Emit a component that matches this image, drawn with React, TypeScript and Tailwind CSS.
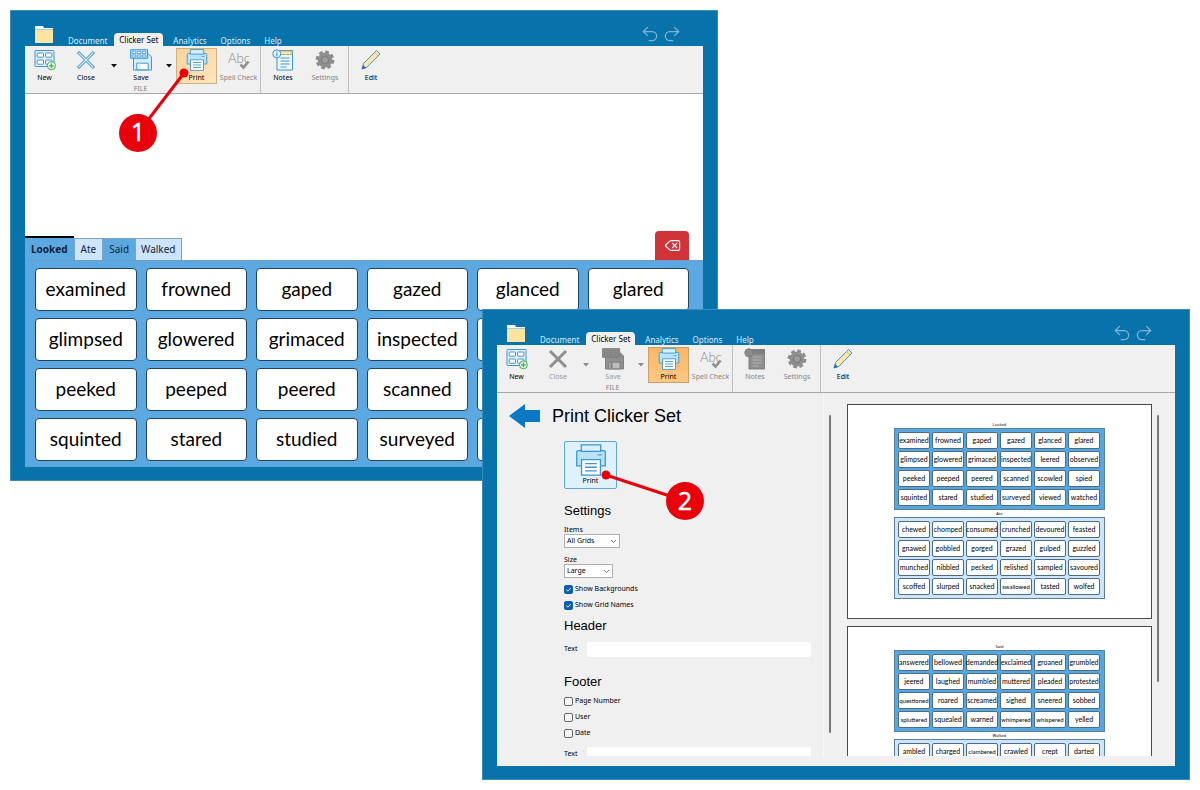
import React, { useId } from 'react';
import { Delete, Redo2, Undo2 } from 'lucide-react';

const BLUE = '#3f95cf';
const GRAY = '#8f8f8f';

const GRIDS = {
  Looked: [
    'examined', 'frowned', 'gaped', 'gazed', 'glanced', 'glared',
    'glimpsed', 'glowered', 'grimaced', 'inspected', 'leered', 'observed',
    'peeked', 'peeped', 'peered', 'scanned', 'scowled', 'spied',
    'squinted', 'stared', 'studied', 'surveyed', 'viewed', 'watched',
  ],
  Ate: [
    'chewed', 'chomped', 'consumed', 'crunched', 'devoured', 'feasted',
    'gnawed', 'gobbled', 'gorged', 'grazed', 'gulped', 'guzzled',
    'munched', 'nibbled', 'pecked', 'relished', 'sampled', 'savoured',
    'scoffed', 'slurped', 'snacked', 'swallowed', 'tasted', 'wolfed',
  ],
  Said: [
    'answered', 'bellowed', 'demanded', 'exclaimed', 'groaned', 'grumbled',
    'jeered', 'laughed', 'mumbled', 'muttered', 'pleaded', 'protested',
    'questioned', 'roared', 'screamed', 'sighed', 'sneered', 'sobbed',
    'spluttered', 'squealed', 'warned', 'whimpered', 'whispered', 'yelled',
  ],
  Walked: ['ambled', 'charged', 'clambered', 'crawled', 'crept', 'darted'],
};

// too long for a preview cell at the normal size
const LONG_WORDS = ['swallowed', 'questioned', 'spluttered', 'whimpered', 'whispered', 'clambered'];

const FolderIcon = () => (
  <svg width="20" height="18" viewBox="0 0 20 18" aria-hidden="true">
    <path d="M1 0h8l1 2h9v4H1z" fill="#fff" />
    <path d="M1 4h18v13H1z" fill="#ffe3a1" />
    <path d="M1 3.5h18" stroke="#9fd0ee" />
  </svg>
);

const NewIcon = () => (
  <svg width="22" height="22" viewBox="0 0 22 22" fill="none" stroke={BLUE} aria-hidden="true">
    <rect x="1" y="1.5" width="19" height="16" rx="1" fill="#e3f2fc" />
    <g fill="#fff">
      <rect x="3.2" y="4" width="6.3" height="4.2" rx=".6" />
      <rect x="11.6" y="4" width="6.3" height="4.2" rx=".6" />
      <rect x="3.2" y="11" width="6.3" height="4.2" rx=".6" />
      <rect x="11.6" y="11" width="6.3" height="4.2" rx=".6" />
    </g>
    <circle cx="17.4" cy="16.8" r="4" fill="#e9f8ea" stroke="#45ad50" />
    <path d="M17.4 14.4v4.8M15 16.8h4.8" stroke="#45ad50" strokeWidth="1.3" />
  </svg>
);

const CloseIcon = ({ disabled }: { disabled?: boolean }) => (
  <svg width="22" height="22" viewBox="0 0 22 22" fill="none" aria-hidden="true">
    <path d="M3 3l16 16M19 3L3 19" stroke={disabled ? GRAY : BLUE} strokeWidth="3" />
    {!disabled && <path d="M3.6 3.6l14.800 14.800M18.400 3.600L3.600 18.400" stroke="#e3f2fc" strokeWidth="1.3" />}
  </svg>
);

const SaveIcon = ({ disabled }: { disabled?: boolean }) => {
  const line = disabled ? '#7f7f7f' : BLUE;
  return (
    <svg width="22" height="22" viewBox="0 0 22 22" fill="none" stroke={line} aria-hidden="true">
      <path d="M3.5 4.5h14.5l3.500 3.500v13h-18z" fill={disabled ? GRAY : '#d3ecfb'} />
      <path d="M.6.7h17v8.600H.6z" fill={disabled ? GRAY : '#c7e7fb'} />
      <path
        d="M2.2 2.3h3.600v2.200H2.200zM7.300 2.300h3.600v2.200H7.300zM12.400 2.300H16v2.200h-3.600zM2.200 6h3.600v2H2.200zM7.300 6h3.600v2H7.300zM12.400 6H16v2h-3.600z"
        fill={disabled ? GRAY : '#fff'}
        strokeWidth=".8"
      />
      <path d="M6.8 14.2h11.400v6.600H6.800z" fill={disabled ? '#bdbdbd' : '#fff'} />
      <path d="M8.5 14.5h2v5.500h-2z" fill={disabled ? '#7f7f7f' : '#d3ecfb'} stroke="none" />
    </svg>
  );
};

const PrintIcon = ({ size = 22 }: { size?: number }) => (
  <svg width={size} height={size} viewBox="0 0 22 22" fill="none" stroke={BLUE} strokeWidth=".9" aria-hidden="true">
    <path d="M1.2 5.5q0-1 1-1h17.600q1 0 1 1V15H1.200z" fill="#b9e2fb" />
    <path d="M4.3.6h13.400v4.500H4.300z" fill="#d9f0fd" />
    <path d="M4.5 10.8h13v10.600h-13z" fill="#fff" />
    <path d="M7 13.5h8M7 16h8M7 18.5h8" />
    <path d="M15.5 7.5h3" strokeWidth=".7" />
  </svg>
);

const SpellIcon = () => (
  <svg width="22" height="22" viewBox="0 0 22 22" aria-hidden="true">
    <text x="0" y="14" fontSize="13" fontWeight="300" fill="#858585" fontFamily="Lato, sans-serif">Abc</text>
    <path d="M12.5 15.5l3 3 5-6" fill="none" stroke={GRAY} strokeWidth="2.6" />
  </svg>
);

const NotesIcon = ({ disabled }: { disabled?: boolean }) => {
  const line = disabled ? '#7f7f7f' : BLUE;
  return (
    <svg width="22" height="22" viewBox="0 0 22 22" fill="none" stroke={line} aria-hidden="true">
      <path d="M5 1.5h15.500v19.500H5z" fill={disabled ? GRAY : '#eef8fe'} />
      <path d="M5.5 2h14.500v3.500H5.500z" fill={disabled ? '#7f7f7f' : '#ffe3a1'} stroke={disabled ? '#7f7f7f' : '#a9a26e'} strokeWidth=".8" />
      <path d="M8.5 9h9M8.5 12h9M8.5 15h9M8.5 18h6" stroke={disabled ? '#b5b5b5' : BLUE} />
      <circle cx="4.8" cy="4.8" r="4" fill={disabled ? GRAY : '#e3f2fc'} />
      <path d="M4.8 4.3v3M4.8 2.4v1" stroke={disabled ? '#7f7f7f' : BLUE} strokeWidth="1.2" />
    </svg>
  );
};

const GearIcon = () => (
  <svg width="22" height="22" viewBox="0 0 22 22" fill="none" aria-hidden="true">
    <circle cx="11" cy="11" r="7.8" stroke="#8c8c8c" strokeWidth="3.2" strokeDasharray="3.6 2.526" />
    <circle cx="11" cy="11" r="7.4" fill="#8f8f8f" />
    <circle cx="11" cy="11" r="3.6" fill="#9c9c9c" stroke="#777" />
  </svg>
);

const PencilIcon = () => (
  <svg width="22" height="22" viewBox="0 0 22 22" fill="none" aria-hidden="true">
    <path d="M2 20l1.5-5.500L16.500 1.500l3.500 3.500L7 18.200z" fill="#ffe7ac" stroke={BLUE} strokeLinejoin="round" />
    <path d="M14.500 3.500l3.700 3.600" stroke="#c9b069" strokeWidth=".9" />
    <path d="M1.8 20.2l1.300-4.300 3 3z" fill="#3565b0" />
  </svg>
);

interface ToolProps {
  icon: React.ReactNode;
  label: string;
  className: string;
  tone?: string;
}

const Tool = ({ icon, label, className, tone = 'text-black' }: ToolProps) => (
  <button className={`flex h-9 shrink-0 flex-col items-center gap-0.5 pt-px ${className}`}>
    {icon}
    <span className={`text-[7px] leading-[10px] whitespace-nowrap ${tone}`}>{label}</span>
  </button>
);

const MenuArrow = ({ label, className, disabled }: { label: string; className: string; disabled?: boolean }) => (
  <button aria-label={label} className={`flex h-9 shrink-0 items-center justify-center ${className}`}>
    <svg width="6" height="4" viewBox="0 0 6 4" aria-hidden="true">
      <path d="M0 0h6L3 3.5z" fill={disabled ? '#8a8a8a' : '#111'} />
    </svg>
  </button>
);

const TitleBar = () => (
  <header className="flex h-[35px] items-end justify-between">
    <div className="flex items-end">
      <span className="mr-2 mb-0.5 ml-[9px]">
        <FolderIcon />
      </span>
      <nav className="flex items-end text-[8px] leading-[11px] text-[#d9ecf8]">
        <button className="pr-[7px] pl-1.5">Document</button>
        <button className="mr-[3px] h-[13px] rounded-t-sm bg-[#f0f0f0] px-[5px] text-black">Clicker Set</button>
        <button className="px-[7px]">Analytics</button>
        <button className="px-[7px]">Options</button>
        <button className="px-[7px]">Help</button>
      </nav>
    </div>
    <div className="mr-[21px] mb-0.5 flex gap-0.5 text-[#7fb4d8]">
      <button aria-label="Undo"><Undo2 size={20} strokeWidth={1.5} /></button>
      <button aria-label="Redo"><Redo2 size={20} strokeWidth={1.5} /></button>
    </div>
  </header>
);

const Ribbon = ({ printing }: { printing?: boolean }) => {
  const off = printing ? 'text-[#9a9a9a]' : 'text-black';
  return (
    <div className="flex h-12 border-b border-[#a9a9a9] bg-[#f0f0f0]">
      <div className="flex flex-col border-r border-[#c0c0c0] pt-0.5">
        <div className="flex">
          <Tool icon={<NewIcon />} label="New" className="w-[39px]" />
          <Tool icon={<CloseIcon disabled={printing} />} label="Close" className="w-11" tone={off} />
          <MenuArrow label="Close options" className="w-3" disabled={printing} />
          <Tool icon={<SaveIcon disabled={printing} />} label="Save" className="w-[42px]" tone={off} />
          <MenuArrow label="Save options" className="w-3.5" disabled={printing} />
          <Tool
            icon={<PrintIcon />}
            label="Print"
            className={printing
              ? 'w-[41px] bg-linear-to-b from-[#f8b765] to-[#ffc983] outline outline-[#c9a06a] -outline-offset-1'
              : 'w-[41px] bg-linear-to-br from-[#fbd29a] to-[#ffe6bd] outline outline-[#cdb27f] -outline-offset-1'}
          />
          <Tool icon={<SpellIcon />} label="Spell Check" className="w-[43px]" tone="text-[#858585]" />
        </div>
        <span className="pr-1 text-center text-[7px] leading-[9px] text-[#808080]">FILE</span>
      </div>
      <div className="flex border-r border-[#c0c0c0] pt-0.5 pr-[3px]">
        <Tool icon={<NotesIcon disabled={printing} />} label="Notes" className="w-11" tone={printing ? 'text-[#858585]' : 'text-black'} />
        <Tool icon={<GearIcon />} label="Settings" className="w-10" tone="text-[#858585]" />
      </div>
      <div className="flex pt-0.5">
        <Tool icon={<PencilIcon />} label="Edit" className="w-11" />
      </div>
    </div>
  );
};

interface WindowProps {
  className?: string;
  printing?: boolean;
  children: React.ReactNode;
}

const AppWindow = ({ className = '', printing, children }: WindowProps) => (
  <section className={`relative w-3/5 border border-[#3d8bb8] bg-[#0873aa] px-3.5 pb-[13px] ${className}`}>
    <TitleBar />
    <Ribbon printing={printing} />
    {children}
  </section>
);

const TABS = [
  { name: 'Looked', className: 'h-6 border-t-2 border-t-black bg-[#5ba9e0] px-1.5 font-bold' },
  { name: 'Ate', className: 'h-[22px] border border-b-0 border-[#7ba4c6] bg-[#cde5fa] px-1.5' },
  { name: 'Said', className: 'h-[22px] border-t border-[#7ba4c6] bg-[#5ba9e0] px-1.5' },
  { name: 'Walked', className: 'h-[22px] border border-b-0 border-[#7ba4c6] bg-[#cde5fa] px-[5px]' },
];

const WordGrid = () => (
  <div>
    <div className="h-[137px] bg-white" />
    <div className="flex items-end justify-between bg-white">
      <div className="flex items-end text-[10px] text-[#12233a]">
        {TABS.map(tab => (
          <button key={tab.name} className={tab.className}>{tab.name}</button>
        ))}
      </div>
      <button aria-label="Delete" className="mr-3.5 flex h-[29px] w-[34px] items-center justify-center rounded-t bg-[#d13438] text-white">
        <Delete size={17} strokeWidth={1.7} />
      </button>
    </div>
    <div className="grid grid-cols-6 gap-x-[9px] gap-y-[7px] border-t border-[#6d9dc2] bg-[#5ba9e0] pt-[7px] pr-3.5 pb-1.5 pl-2.5">
      {GRIDS.Looked.map(word => (
        <button key={word} className="h-[43px] rounded border border-[#1f4463] bg-white pb-px font-[Lato,sans-serif] text-[19px] text-black">
          {word}
        </button>
      ))}
    </div>
  </div>
);

const MiniGrid = ({ name, words, dark }: { name: string; words: string[]; dark?: boolean }) => (
  <div>
    <p className="h-[7px] text-center text-[4px] leading-[7px]">{name}</p>
    <div className={`grid grid-cols-6 gap-0.5 border border-[#5c7f9c] py-[3px] pr-1 pl-[3px] ${dark ? 'bg-[#56a6e0]' : 'bg-[#cde5fa]'}`}>
      {words.map(word => (
        <div
          key={word}
          className={`flex h-[17px] min-w-0 items-center justify-center rounded-xs border border-[#4c6b85] bg-white font-[Lato,sans-serif] whitespace-nowrap ${LONG_WORDS.includes(word) ? 'text-[6px]' : 'text-[7px]'}`}
        >
          {word}
        </div>
      ))}
    </div>
  </div>
);

const PreviewPage = ({ children }: { children: React.ReactNode }) => (
  <div className="h-[215px] shrink-0 border border-[#4a4a4a] bg-white px-[46px] pt-4">{children}</div>
);

const Dropdown = ({ label, option, className }: { label: string; option: string; className: string }) => {
  const id = useId();
  return (
    <div className="flex flex-col items-start">
      <label htmlFor={id} className="leading-[9px]">{label}</label>
      <div className={`relative h-[14px] ${className}`}>
        <select id={id} className="block h-full w-full appearance-none border border-[#b0b0b0] bg-white pl-0.5 leading-3">
          <option>{option}</option>
        </select>
        <svg className="pointer-events-none absolute top-[5px] right-[3px]" width="7" height="5" viewBox="0 0 7 5" aria-hidden="true">
          <path d="M1 1l2.5 2.5L6 1" fill="none" stroke="#666" strokeWidth=".9" />
        </svg>
      </div>
    </div>
  );
};

const Checkbox = ({ label, checked }: { label: string; checked?: boolean }) => (
  <label className="flex h-[9px] items-center gap-0.5">
    <span className="relative flex">
      <input
        type="checkbox"
        defaultChecked={checked}
        className="peer size-[9px] appearance-none rounded-xs border border-[#666] bg-[#f7f7f7] checked:border-[#0a5fb4] checked:bg-[#0a5fb4]"
      />
      <svg className="pointer-events-none absolute inset-0 hidden peer-checked:block" width="9" height="9" viewBox="0 0 9 9" aria-hidden="true">
        <path d="M2.3 4.6l1.600 1.500 2.800-3" fill="none" stroke="#fff" strokeWidth=".9" />
      </svg>
    </span>
    {label}
  </label>
);

const TextRow = () => (
  <label className="flex items-center">
    <span className="w-[23px]">Text</span>
    <input type="text" className="h-[15px] min-w-0 flex-1 rounded-xs bg-white px-1 outline-none" />
  </label>
);

const Heading = ({ children }: { children: React.ReactNode }) => (
  <h2 className="font-['Liberation_Sans',sans-serif] text-[13px] leading-4 text-black">{children}</h2>
);

const PrintPanel = () => (
  <div className="flex h-[373px] overflow-hidden bg-[#f0f0f0] pb-2.5">
    <div className="min-w-0 flex-1 overflow-hidden border-r border-[#f8f8f8] pt-[11px] pr-3 pl-3 text-[7px]">
      <div className="flex items-center gap-3">
        <button aria-label="Back">
          <svg width="31" height="24" viewBox="0 0 31 24" className="block" aria-hidden="true">
            <path d="M0 12L16 0v6h15v12H16v6z" fill="#0b78c4" />
          </svg>
        </button>
        <h1 className="font-['Liberation_Sans',sans-serif] text-[18px] leading-6 text-black">Print Clicker Set</h1>
      </div>
      <div className="pl-[55px]">
        <button className="mt-[13px] flex h-12 w-[53px] flex-col items-center rounded-xs border border-[#5ea9da] bg-[#dff1fd] pt-0.5">
          <PrintIcon size={32} />
          <span className="leading-[10px]">Print</span>
        </button>
        <div className="mt-3.5">
          <Heading>Settings</Heading>
        </div>
        <div className="mt-1.5 flex flex-col gap-[7px]">
          <Dropdown label="Items" option="All Grids" className="w-14" />
          <Dropdown label="Size" option="Large" className="w-[49px]" />
          <Checkbox label="Show Backgrounds" checked />
          <Checkbox label="Show Grid Names" checked />
        </div>
        <div className="mt-2 mb-2">
          <Heading>Header</Heading>
        </div>
        <TextRow />
        <div className="mt-[17px]">
          <Heading>Footer</Heading>
        </div>
        <div className="mt-[7px] mb-[9px] flex flex-col gap-[7px]">
          <Checkbox label="Page Number" />
          <Checkbox label="User" />
          <Checkbox label="Date" />
        </div>
        <TextRow />
      </div>
    </div>
    <div className="mt-[22px] mr-4 ml-[5px] h-[318px] w-0.5 rounded bg-[#777]" />
    <div className="flex w-[45%] flex-col gap-[7px] overflow-hidden pt-[11px]">
      <PreviewPage>
        <MiniGrid name="Looked" words={GRIDS.Looked} dark />
        <MiniGrid name="Ate" words={GRIDS.Ate} />
      </PreviewPage>
      <PreviewPage>
        <MiniGrid name="Said" words={GRIDS.Said} dark />
        <MiniGrid name="Walked" words={GRIDS.Walked} />
      </PreviewPage>
    </div>
    <div className="mt-[22px] mr-4 ml-[5px] h-[267px] w-0.5 rounded bg-[#777]" />
  </div>
);

export default function App() {
  return (
    <main className="min-h-screen bg-white p-2.5 font-['Noto_Sans',sans-serif] text-black">
      <AppWindow>
        <WordGrid />
        <svg className="pointer-events-none absolute top-[54px] left-[107px]" width="76" height="90" viewBox="0 0 76 90">
          <path d="M66 8L20 68" stroke="#e8000b" strokeWidth="3" />
          <circle cx="66" cy="8" r="4.5" fill="#e8000b" />
          <circle cx="20" cy="68" r="19" fill="#e8000b" />
          <text x="20" y="76" textAnchor="middle" fontSize="25" fill="#fff" stroke="#fff" strokeWidth=".4">1</text>
        </svg>
      </AppWindow>
      <AppWindow printing className="-mt-[172px] ml-auto">
        <PrintPanel />
        <svg className="pointer-events-none absolute top-[158px] left-[117px]" width="106" height="54" viewBox="0 0 106 54">
          <path d="M6 7l79 26" stroke="#e8000b" strokeWidth="3" />
          <circle cx="6" cy="7" r="4.5" fill="#e8000b" />
          <circle cx="85" cy="33" r="19" fill="#e8000b" />
          <text x="85" y="42" textAnchor="middle" fontSize="25" fill="#fff" stroke="#fff" strokeWidth=".4">2</text>
        </svg>
      </AppWindow>
    </main>
  );
}
